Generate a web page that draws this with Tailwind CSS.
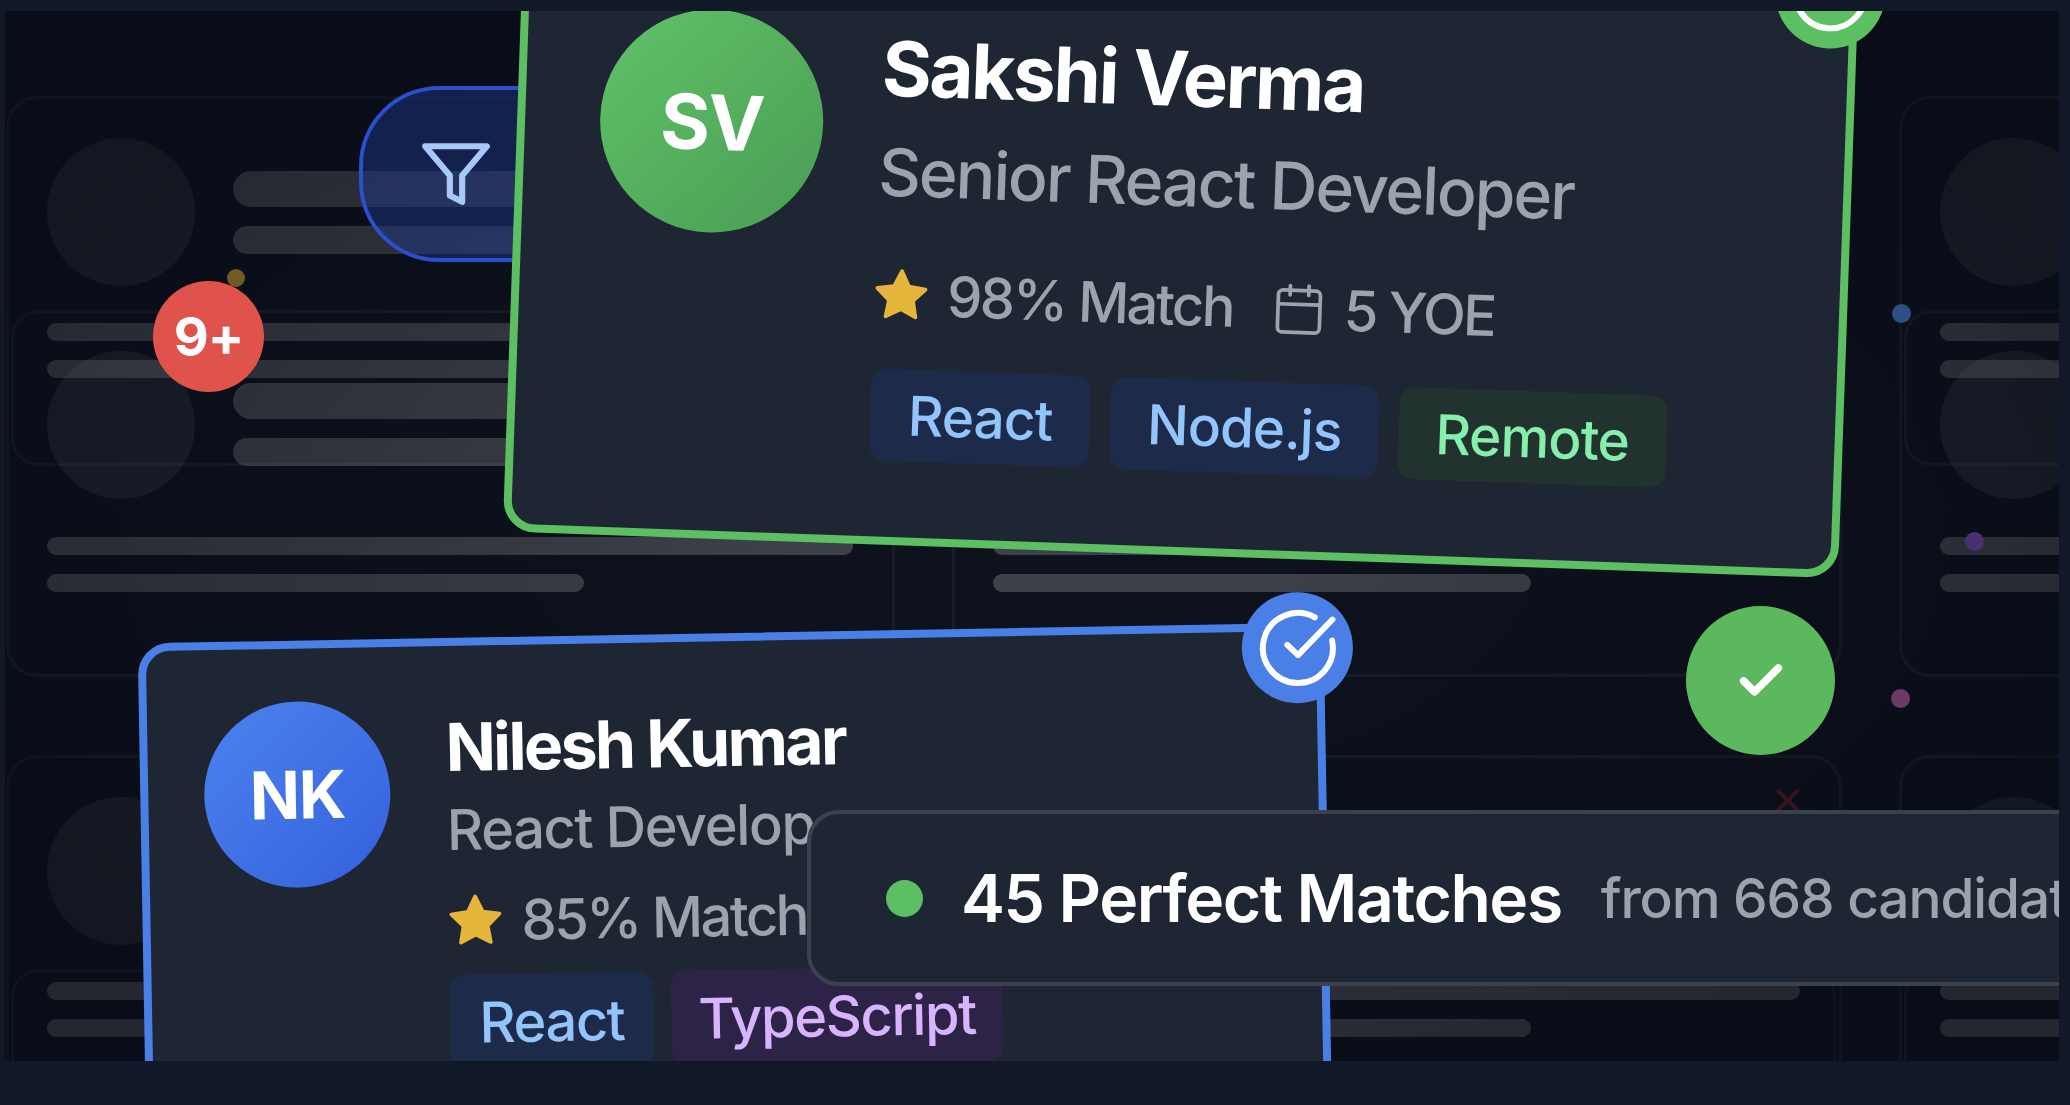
<!DOCTYPE html>
<html lang="en">
<head>
    <meta charset="UTF-8">
    <meta name="viewport" content="width=device-width, initial-scale=1.0">
    <title>Candidate Matches</title>
    <script src="https://cdn.jsdelivr.net/npm/@tailwindcss/browser@4"></script>
</head>
<body class="h-[1105px] w-[2070px] overflow-hidden bg-[#111827] font-[Inter,sans-serif]">
    <div class="pl-[5px] pt-[11px]">
        <div class="relative h-[1050px] w-[2054px] overflow-hidden bg-[#0e121d] blur-[0.6px]">

            <!-- Skeleton cards behind everything -->
            <div class="grid grid-cols-[889px_890px_889px] gap-x-[57px] gap-y-[78px] pl-[1px] pt-[85px]">
                <div class="h-[581px] rounded-[32px] border-[3px] border-white/5 pl-[38px] pr-[39px] pt-[39px]">
                    <div class="flex gap-[38px]">
                        <div class="size-[148px] rounded-full bg-white/8"></div>
                        <div class="pt-[33px]">
                            <div class="h-[36px] w-[540px] rounded-full bg-white/20"></div>
                            <div class="mt-[19px] h-[28px] w-[400px] rounded-full bg-white/20"></div>
                        </div>
                    </div>
                    <div class="-ml-[36px] -mr-[36px] mt-[24px] h-[156px] rounded-[28px] border-[3px] border-white/5 px-[33px] pt-[10px]">
                        <div class="h-[18px] rounded-full bg-white/20"></div>
                        <div class="mt-[19px] h-[18px] w-2/3 rounded-full bg-white/20"></div>
                    </div>
                    <div class="-mt-[115px] flex gap-[38px]">
                        <div class="size-[148px] rounded-full bg-white/8"></div>
                        <div class="pt-[32px]">
                            <div class="h-[36px] w-[540px] rounded-full bg-white/20"></div>
                            <div class="mt-[19px] h-[28px] w-[400px] rounded-full bg-white/20"></div>
                        </div>
                    </div>
                    <div class="mt-[38px] h-[18px] rounded-full bg-white/20"></div>
                    <div class="mt-[19px] h-[18px] w-2/3 rounded-full bg-white/20"></div>
                </div>
                <div class="h-[581px] rounded-[32px] border-[3px] border-white/5 pl-[38px] pr-[39px] pt-[39px]">
                    <div class="flex gap-[38px]">
                        <div class="size-[148px] rounded-full bg-white/8"></div>
                        <div class="pt-[33px]">
                            <div class="h-[36px] w-[540px] rounded-full bg-white/20"></div>
                            <div class="mt-[19px] h-[28px] w-[400px] rounded-full bg-white/20"></div>
                        </div>
                    </div>
                    <div class="-ml-[36px] -mr-[36px] mt-[24px] h-[156px] rounded-[28px] border-[3px] border-white/5 px-[33px] pt-[10px]">
                        <div class="h-[18px] rounded-full bg-white/20"></div>
                        <div class="mt-[19px] h-[18px] w-2/3 rounded-full bg-white/20"></div>
                    </div>
                    <div class="-mt-[115px] flex gap-[38px]">
                        <div class="size-[148px] rounded-full bg-white/8"></div>
                        <div class="pt-[32px]">
                            <div class="h-[36px] w-[540px] rounded-full bg-white/20"></div>
                            <div class="mt-[19px] h-[28px] w-[400px] rounded-full bg-white/20"></div>
                        </div>
                    </div>
                    <div class="mt-[38px] h-[18px] rounded-full bg-white/20"></div>
                    <div class="mt-[19px] h-[18px] w-2/3 rounded-full bg-white/20"></div>
                </div>
                <div class="h-[581px] rounded-[32px] border-[3px] border-white/5 pl-[38px] pr-[39px] pt-[39px]">
                    <div class="flex gap-[38px]">
                        <div class="size-[148px] rounded-full bg-white/8"></div>
                        <div class="pt-[33px]">
                            <div class="h-[36px] w-[540px] rounded-full bg-white/20"></div>
                            <div class="mt-[19px] h-[28px] w-[400px] rounded-full bg-white/20"></div>
                        </div>
                    </div>
                    <div class="-ml-[36px] -mr-[36px] mt-[24px] h-[156px] rounded-[28px] border-[3px] border-white/5 px-[33px] pt-[10px]">
                        <div class="h-[18px] rounded-full bg-white/20"></div>
                        <div class="mt-[19px] h-[18px] w-2/3 rounded-full bg-white/20"></div>
                    </div>
                    <div class="-mt-[115px] flex gap-[38px]">
                        <div class="size-[148px] rounded-full bg-white/8"></div>
                        <div class="pt-[32px]">
                            <div class="h-[36px] w-[540px] rounded-full bg-white/20"></div>
                            <div class="mt-[19px] h-[28px] w-[400px] rounded-full bg-white/20"></div>
                        </div>
                    </div>
                    <div class="mt-[38px] h-[18px] rounded-full bg-white/20"></div>
                    <div class="mt-[19px] h-[18px] w-2/3 rounded-full bg-white/20"></div>
                </div>
                <div class="h-[581px] rounded-[32px] border-[3px] border-white/5 pl-[38px] pr-[39px] pt-[39px]">
                    <div class="flex gap-[38px]">
                        <div class="size-[148px] rounded-full bg-white/8"></div>
                    </div>
                    <div class="-ml-[36px] -mr-[36px] mt-[24px] h-[156px] rounded-[28px] border-[3px] border-white/5 px-[33px] pt-[10px]">
                        <div class="h-[18px] rounded-full bg-white/20"></div>
                        <div class="mt-[19px] h-[18px] w-2/3 rounded-full bg-white/20"></div>
                    </div>
                </div>
                <div class="relative h-[581px] rounded-[32px] border-[3px] border-white/5 pl-[38px] pr-[39px] pt-[39px]">
                    <span class="absolute right-[34px] top-[23px] text-[40px] leading-none text-red-500/30">✕</span>
                    <div class="flex gap-[38px]">
                        <div class="size-[148px] rounded-full bg-white/8"></div>
                    </div>
                    <div class="-ml-[36px] -mr-[36px] mt-[24px] h-[156px] rounded-[28px] border-[3px] border-white/5 px-[33px] pt-[10px]">
                        <div class="h-[18px] rounded-full bg-white/20"></div>
                        <div class="mt-[19px] h-[18px] w-2/3 rounded-full bg-white/20"></div>
                    </div>
                </div>
                <div class="h-[581px] rounded-[32px] border-[3px] border-white/5 pl-[38px] pr-[39px] pt-[39px]">
                    <div class="flex gap-[38px]">
                        <div class="size-[148px] rounded-full bg-white/8"></div>
                    </div>
                    <div class="-ml-[36px] -mr-[36px] mt-[24px] h-[156px] rounded-[28px] border-[3px] border-white/5 px-[33px] pt-[10px]">
                        <div class="h-[18px] rounded-full bg-white/20"></div>
                        <div class="mt-[19px] h-[18px] w-2/3 rounded-full bg-white/20"></div>
                    </div>
                </div>
            </div>

            <!-- Vignette over the skeletons -->
            <div class="absolute inset-0 bg-[radial-gradient(ellipse_at_center,rgba(5,8,18,0)_15%,rgba(4,7,16,0.45)_80%)]"></div>

            <!-- Small floating dots -->
            <div class="absolute left-[222px] top-[258px] size-[18px] rounded-full bg-[#6f5b25]"></div>
            <div class="absolute left-[1887px] top-[293px] size-[19px] rounded-full bg-[#2d4f84]"></div>
            <div class="absolute left-[1960px] top-[521px] size-[19px] rounded-full bg-[#4a3070]"></div>
            <div class="absolute left-[1886px] top-[678px] size-[19px] rounded-full bg-[#6b3a66]"></div>

            <!-- Filter pill -->
            <div class="absolute left-[354px] top-[75px] flex h-[176px] w-[500px] items-center rounded-[80px] border-4 border-[#2c4fd0] bg-blue-900/45 pl-[56px]">
                <svg width="74" height="74" viewBox="0 0 24 24" fill="none" stroke="#a8c8f8" stroke-width="2" stroke-linecap="round" stroke-linejoin="round"><polygon points="22 3 2 3 10 12.46 10 19 14 21 14 12.46 22 3"/></svg>
            </div>

            <!-- Notification badge -->
            <div class="absolute left-[148px] top-[270px] flex size-[111px] items-center justify-center rounded-full bg-[#e0534c] text-[54px] font-bold tracking-[-1px] text-white">9+</div>

            <!-- Green check -->
            <div class="absolute left-[1681px] top-[595px] flex size-[149px] items-center justify-center rounded-full bg-[#5cb85f]">
                <svg width="52" height="52" viewBox="0 0 24 24" fill="none" stroke="white" stroke-width="3.5" stroke-linecap="round" stroke-linejoin="round"><path d="M20 6 9 17l-5-5"/></svg>
            </div>

            <!-- Sakshi card -->
            <div class="absolute left-[508px] top-[-68px] flex h-[612px] w-[1336px] rotate-2 gap-[57px] rounded-[32px] border-[8px] border-[#5cc063] bg-[#1f2633] pl-[75px] pt-[75px]">
                <div class="flex size-[223px] shrink-0 items-center justify-center rounded-full bg-linear-to-br from-[#60c268] to-[#4a9d55] text-[76px] font-bold tracking-[-2px] text-white">SV</div>
                <div>
                    <div class="text-[76px] font-bold leading-[104px] tracking-[-2.2px] text-white">Sakshi Verma</div>
                    <div class="mt-[6px] text-[66px] font-medium leading-[92px] tracking-[-2px] text-[#9ca3af]">Senior React Developer</div>
                    <div class="mt-[39px] flex h-[76px] items-center text-[56px] font-medium tracking-[-2.5px] text-[#9ca3af]">
                        <svg class="-ml-[2px]" width="58" height="58" viewBox="0 0 24 24" fill="#e5b53c" stroke="#e5b53c" stroke-width="1.5" stroke-linejoin="round"><path d="M12 2l3.1 6.3 6.9 1-5 4.9 1.2 6.8L12 17.8 5.8 21l1.2-6.8-5-4.9 6.9-1z"/></svg>
                        <span class="ml-[17px]">98% Match</span>
                        <svg class="ml-[38px]" width="56" height="56" viewBox="0 0 24 24" fill="none" stroke="#9ca3af" stroke-width="1.6" stroke-linecap="round" stroke-linejoin="round"><rect x="3" y="4" width="18" height="18" rx="2"/><path d="M16 2v4M8 2v4M3 10h18"/></svg>
                        <span class="ml-[17px]">5 YOE</span>
                    </div>
                    <div class="mt-[36px] flex gap-[20px] text-[55px] font-medium tracking-[-1px]">
                        <span class="flex h-[92px] items-center rounded-[16px] bg-[#1e2a4a] px-[38px] text-[#93c5fd]">React</span>
                        <span class="flex h-[92px] items-center rounded-[16px] bg-[#1e2a4a] px-[37px] text-[#93c5fd]">Node.js</span>
                        <span class="flex h-[92px] items-center rounded-[16px] bg-[#22332f] px-[37px] text-[#86efac]">Remote</span>
                    </div>
                </div>
                <div class="absolute right-[-35px] top-[-35px] flex size-[110px] items-center justify-center rounded-full bg-[#5cc063]">
                    <svg width="84" height="84" viewBox="0 0 24 24" fill="none" stroke="white" stroke-width="1.7" stroke-linecap="round" stroke-linejoin="round"><path d="M21.8 10A10 10 0 1 1 17 3.3"/><path d="m9 11 3 3L22 4"/></svg>
                </div>
            </div>

            <!-- Nilesh card -->
            <div class="absolute left-[137px] top-[622px] flex h-[510px] w-[1186px] -rotate-1 gap-[56px] rounded-[32px] border-[8px] border-[#4a7fe8] bg-[#1f2633] pl-[56px] pt-[53px]">
                <div class="flex size-[186px] shrink-0 items-center justify-center rounded-full bg-linear-to-br from-[#4d82ee] to-[#3560dd] text-[66px] font-bold tracking-[-1.5px] text-white">NK</div>
                <div>
                    <div class="text-[66px] font-bold leading-[96px] tracking-[-2.6px] text-white">Nilesh Kumar</div>
                    <div class="mt-[4px] text-[56px] font-medium leading-[62px] tracking-[-1.4px] text-[#9ca3af]">React Developer</div>
                    <div class="mt-[27px] flex h-[66px] items-center text-[56px] font-medium tracking-[-2.5px] text-[#9ca3af]">
                        <svg class="-ml-[2px]" width="58" height="58" viewBox="0 0 24 24" fill="#e5b53c" stroke="#e5b53c" stroke-width="1.5" stroke-linejoin="round"><path d="M12 2l3.1 6.3 6.9 1-5 4.9 1.2 6.8L12 17.8 5.8 21l1.2-6.8-5-4.9 6.9-1z"/></svg>
                        <span class="ml-[17px]">85% Match</span>
                    </div>
                    <div class="mt-[21px] flex gap-[18px] text-[56px] font-medium tracking-[-1.4px]">
                        <span class="flex h-[96px] items-center rounded-[16px] bg-[#1e2a4a] px-[29px] text-[#93c5fd]">React</span>
                        <span class="flex h-[96px] items-center rounded-[16px] bg-[#2d2347] px-[27px] text-[#d8b4fe]">TypeScript</span>
                    </div>
                </div>
                <div class="absolute right-[-37px] top-[-39px] flex size-[111px] items-center justify-center rounded-full bg-[#4a7fe8]">
                    <svg width="84" height="84" viewBox="0 0 24 24" fill="none" stroke="white" stroke-width="1.7" stroke-linecap="round" stroke-linejoin="round"><path d="M21.8 10A10 10 0 1 1 17 3.3"/><path d="m9 11 3 3L22 4"/></svg>
                </div>
            </div>

            <!-- Result toast -->
            <div class="absolute left-[802px] top-[799px] flex h-[176px] w-[1400px] items-center rounded-[32px] border-4 border-[#3a4250] bg-[#1f2633] pl-[75px]">
                <div class="size-[37px] rounded-full bg-[#5cc063]"></div>
                <div class="ml-[38px] text-[66px] font-semibold tracking-[-1.5px] text-white">45 Perfect Matches</div>
                <div class="ml-[39px] text-[55px] font-medium tracking-[-1.1px] text-[#9ca3af]">from 668 candidates</div>
            </div>
        </div>
    </div>
</body>
</html>
